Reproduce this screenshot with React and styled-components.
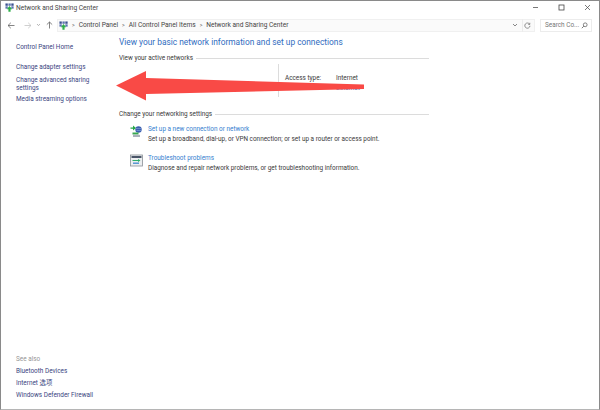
import React from "react";
import styled, { createGlobalStyle } from "styled-components";

const Global = createGlobalStyle`
  html, body { margin: 0; padding: 0; background: #fff; }
  #root { width: 600px; height: 410px; overflow: hidden; }
`;

const Window = styled.div`
  position: relative;
  width: 600px;
  height: 410px;
  box-sizing: border-box;
  background: #fff;
  border: 1px solid #8a8a8a;
  border-bottom-color: #b5b5b5;
  display: flex;
  flex-direction: column;
  font-family: Roboto, "Noto Sans CJK SC", sans-serif;
  font-size: 6.4px;
  color: #3a3a3a;
`;

const TitleBar = styled.div`
  height: 13px;
  display: flex;
  align-items: center;
  padding-left: 4px;
  gap: 2px;
  flex: none;
`;

const Title = styled.span`
  flex: 1;
  font-size: 6.6px;
  color: #444;
`;

const WinButton = styled.button`
  width: 24px;
  height: 13px;
  border: 0;
  padding: 0;
  background: none;
  display: flex;
  align-items: center;
  justify-content: center;
`;

const NavBar = styled.div`
  height: 14px;
  margin-top: 4px;
  display: flex;
  align-items: center;
  flex: none;
`;

const NavArrow = styled.div`
  width: ${(props) => props.$width || 13}px;
  display: flex;
  align-items: center;
  justify-content: center;
`;

const AddressBox = styled.div`
  flex: none;
  width: 478px;
  height: 13px;
  margin-left: 2px;
  box-sizing: border-box;
  background: #fafafa;
  border: 1px solid #f0f0f0;
  display: flex;
  align-items: center;
  padding-left: 1px;
  gap: 4px;
`;

const Crumb = styled.span`
  font-size: 6.6px;
  color: #444;
  white-space: nowrap;
`;

const Chevron = styled.span`
  color: #555;
  font-size: 5px;
`;

const AddressEnd = styled.div`
  margin-left: auto;
  display: flex;
  align-items: center;
  gap: 4px;
  padding-right: 2px;
`;

const RefreshBox = styled.div`
  width: 9px;
  height: 13px;
  display: flex;
  align-items: center;
  justify-content: center;
  border-left: 1px solid #ececec;
`;

const SearchBox = styled.div`
  width: 52px;
  height: 13px;
  margin-left: 5px;
  box-sizing: border-box;
  border: 1px solid #ececec;
  display: flex;
  align-items: center;
  justify-content: space-between;
  padding: 0 3px 0 4px;
  color: #777;
`;

const Body = styled.div`
  flex: 1;
  display: flex;
  min-height: 0;
`;

const Sidebar = styled.nav`
  width: 117px;
  flex: none;
  box-sizing: border-box;
  padding: 11px 0 10px 15px;
  display: flex;
  flex-direction: column;
`;

const SideLink = styled.div`
  color: #3a4580;
  line-height: 8px;
  margin-top: ${(props) => props.$top || 0}px;
  width: 84px;
`;

const SeeAlso = styled.div`
  margin-top: auto;
  color: #969696;
  line-height: 8px;
`;

const Main = styled.main`
  flex: 1;
  padding: 4px 0 0 1px;
`;

const Heading = styled.h1`
  margin: 0;
  font-size: 8.35px;
  font-weight: 400;
  line-height: 13px;
  color: #2f6cc0;
`;

const SectionTitle = styled.div`
  display: flex;
  align-items: center;
  gap: 3px;
  width: 310px;
  margin-top: ${(props) => props.$top}px;
  line-height: 9px;
  white-space: nowrap;
  &::after {
    content: "";
    flex: 1;
    height: 1px;
    background: #dcdcdc;
  }
`;

const NetworkRow = styled.div`
  width: 310px;
  height: 34px;
  display: flex;
`;

const NetworkName = styled.div`
  width: 160px;
  box-sizing: border-box;
  border-right: 1px solid #dcdcdc;
  margin-top: 1px;
`;

const AccessGrid = styled.div`
  padding: 11px 0 0 6px;
  display: grid;
  grid-template-columns: 51px auto;
  row-gap: 1px;
  line-height: 9px;
  align-content: start;
`;

const AccessLink = styled.span`
  color: #2f6cc0;
  grid-column: 2;
`;

const Task = styled.div`
  display: flex;
  gap: 5px;
  margin: ${(props) => props.$top}px 0 0 11px;
`;

const TaskIcon = styled.div`
  width: 13px;
  height: 13px;
  flex: none;
  margin-top: 1px;
`;

const TaskLink = styled.div`
  color: #3580cf;
  line-height: 10px;
`;

const TaskText = styled.div`
  line-height: 11px;
  white-space: nowrap;
`;

const Arrow = styled.svg`
  position: absolute;
  left: -1px;
  top: -1px;
  pointer-events: none;
`;

const NetworkIcon = ({ size = 9 }) => (
  <svg width={size} height={size} viewBox="0 0 10 10">
    <rect x="0.5" y="0.5" width="2.6" height="2.6" fill="#3a4f8f" />
    <rect x="3.8" y="0.5" width="2.6" height="2.6" fill="#5c74b0" />
    <rect x="7" y="0.5" width="2.6" height="2.6" fill="#3a4f8f" />
    <rect x="0.5" y="3.7" width="2.6" height="2.6" fill="#5c74b0" />
    <rect x="7" y="3.7" width="2.6" height="2.6" fill="#5c74b0" />
    <path d="M5 3.4 L8 7 H6.2 V9.6 H3.8 V7 H2 Z" fill="#2fae4a" />
  </svg>
);

const App = () => (
  <>
    <Global />
    <Window>
      <TitleBar>
        <NetworkIcon />
        <Title>Network and Sharing Center</Title>
        <WinButton>
          <svg width="7" height="7" viewBox="0 0 7 7"><path d="M1 3.5H6" stroke="#555" strokeWidth="0.8" /></svg>
        </WinButton>
        <WinButton>
          <svg width="7" height="7" viewBox="0 0 7 7"><rect x="1" y="1" width="5" height="5" fill="none" stroke="#444" strokeWidth="0.8" /></svg>
        </WinButton>
        <WinButton>
          <svg width="7" height="7" viewBox="0 0 7 7"><path d="M1 1L6 6M6 1L1 6" stroke="#444" strokeWidth="0.7" /></svg>
        </WinButton>
      </TitleBar>
      <NavBar>
        <NavArrow $width={20}>
          <svg width="8" height="7" viewBox="0 0 8 7"><path d="M7.5 3.5H1M3.8 0.8L1 3.5L3.8 6.2" fill="none" stroke="#666" strokeWidth="0.8" /></svg>
        </NavArrow>
        <NavArrow $width={13}>
          <svg width="8" height="7" viewBox="0 0 8 7"><path d="M0.5 3.5H7M4.2 0.8L7 3.5L4.2 6.2" fill="none" stroke="#c4c4c4" strokeWidth="0.8" /></svg>
        </NavArrow>
        <NavArrow $width={9}>
          <svg width="5" height="4" viewBox="0 0 5 4"><path d="M1 1L2.5 2.6L4 1" fill="none" stroke="#888" strokeWidth="0.6" /></svg>
        </NavArrow>
        <NavArrow $width={12}>
          <svg width="7" height="8" viewBox="0 0 7 8"><path d="M3.5 7.5V1M0.8 3.6L3.5 1L6.2 3.6" fill="none" stroke="#666" strokeWidth="0.8" /></svg>
        </NavArrow>
        <AddressBox>
          <NetworkIcon />
          <Chevron>&gt;</Chevron>
          <Crumb>Control Panel</Crumb>
          <Chevron>&gt;</Chevron>
          <Crumb>All Control Panel Items</Crumb>
          <Chevron>&gt;</Chevron>
          <Crumb>Network and Sharing Center</Crumb>
          <AddressEnd>
            <svg width="6" height="4" viewBox="0 0 6 4"><path d="M1 1L3 3L5 1" fill="none" stroke="#555" strokeWidth="0.7" /></svg>
            <RefreshBox>
              <svg width="7" height="7" viewBox="0 0 7 7"><path d="M5.6 2.2A2.6 2.6 0 1 0 6 3.8M5.8 0.8V2.4H4.2" fill="none" stroke="#666" strokeWidth="0.7" /></svg>
            </RefreshBox>
          </AddressEnd>
        </AddressBox>
        <SearchBox>
          <span>Search Co...</span>
          <svg width="7" height="7" viewBox="0 0 7 7"><circle cx="4.2" cy="2.8" r="1.9" fill="none" stroke="#555" strokeWidth="0.7" /><path d="M2.8 4.2L0.8 6.2" stroke="#555" strokeWidth="0.8" /></svg>
        </SearchBox>
      </NavBar>
      <Body>
        <Sidebar>
          <SideLink>Control Panel Home</SideLink>
          <SideLink $top={12}>Change adapter settings</SideLink>
          <SideLink $top={5}>Change advanced sharing settings</SideLink>
          <SideLink $top={3}>Media streaming options</SideLink>
          <SeeAlso>See also</SeeAlso>
          <SideLink $top={4}>Bluetooth Devices</SideLink>
          <SideLink $top={4}>Internet 选项</SideLink>
          <SideLink $top={4}>Windows Defender Firewall</SideLink>
        </Sidebar>
        <Main>
          <Heading>View your basic network information and set up connections</Heading>
          <SectionTitle $top={5}>View your active networks</SectionTitle>
          <NetworkRow>
            <NetworkName />
            <AccessGrid>
              <span>Access type:</span>
              <span>Internet</span>
              <AccessLink>Ethernet</AccessLink>
            </AccessGrid>
          </NetworkRow>
          <SectionTitle $top={13}>Change your networking settings</SectionTitle>
          <Task $top={5}>
            <TaskIcon>
              <svg width="13" height="13" viewBox="0 0 13 13">
                <circle cx="8.5" cy="4.5" r="3.2" fill="#3b5fb0" />
                <path d="M6 3.5H11M6.5 5.5H11" stroke="#9db6e6" strokeWidth="0.5" />
                <path d="M0.5 2.5H3V0.5L6 3L3 5.5V3.8H0.5Z" fill="#27a648" />
                <rect x="2.5" y="7.5" width="6" height="2" fill="#38a850" />
                <rect x="3" y="9.8" width="7" height="2.2" fill="#a9b1bb" />
              </svg>
            </TaskIcon>
            <div>
              <TaskLink>Set up a new connection or network</TaskLink>
              <TaskText>Set up a broadband, dial-up, or VPN connection; or set up a router or access point.</TaskText>
            </div>
          </Task>
          <Task $top={8}>
            <TaskIcon>
              <svg width="13" height="13" viewBox="0 0 13 13">
                <rect x="0.5" y="1" width="12" height="11" fill="#eceef0" stroke="#8a8f96" strokeWidth="0.8" />
                <rect x="1.5" y="2" width="10" height="2" fill="#4a5568" />
                <path d="M2.5 6H8V5L10.5 6.5L8 8V7H2.5Z" fill="#2fae6a" />
                <rect x="3" y="8.5" width="6" height="1.4" fill="#4d8fd0" />
              </svg>
            </TaskIcon>
            <div>
              <TaskLink>Troubleshoot problems</TaskLink>
              <TaskText>Diagnose and repair network problems, or get troubleshooting information.</TaskText>
            </div>
          </Task>
        </Main>
      </Body>
      <Arrow width="600" height="410" viewBox="0 0 600 410">
        <path d="M116 85.5 L146 71 L146 78 L364 84.5 L364 89 L146 94 L146 100.5 Z" fill="#f94a46" />
      </Arrow>
    </Window>
  </>
);

export default App;
